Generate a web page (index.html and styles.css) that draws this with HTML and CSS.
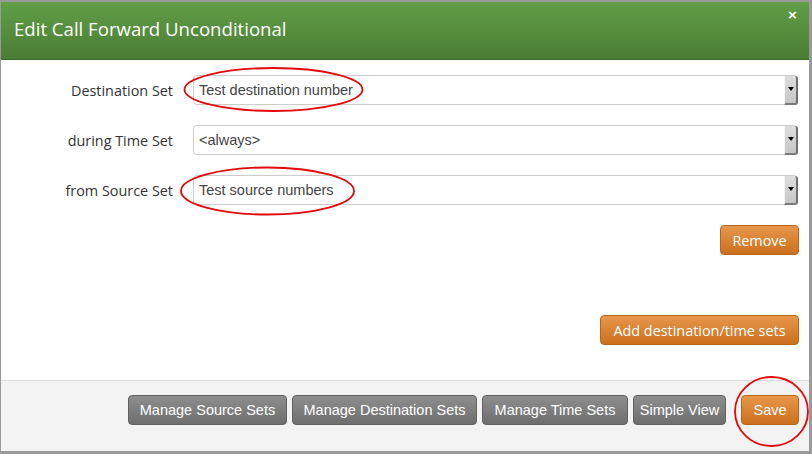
FILE: index.html
```html
<!DOCTYPE html>
<html>
<head>
<meta charset="utf-8">
<link rel="stylesheet" href="styles.css">
</head>
<body>
<div class="modal">
  <div class="modal-header">
    <h3 class="modal-title">Edit Call Forward Unconditional</h3>
    <span class="close">×</span>
  </div>
  <div class="modal-body">
    <div class="form-row">
      <label class="form-label">Destination Set</label>
      <div class="select"><span class="select-text">Test destination number</span><span class="select-arrow"></span></div>
    </div>
    <div class="form-row">
      <label class="form-label">during Time Set</label>
      <div class="select"><span class="select-text">&lt;always&gt;</span><span class="select-arrow"></span></div>
    </div>
    <div class="form-row">
      <label class="form-label">from Source Set</label>
      <div class="select"><span class="select-text">Test source numbers</span><span class="select-arrow"></span></div>
    </div>
    <div class="action-row remove-row">
      <button class="btn btn-orange btn-sans">Remove</button>
    </div>
    <div class="action-row add-row">
      <button class="btn btn-orange btn-sans">Add destination/time sets</button>
    </div>
  </div>
  <div class="modal-footer">
    <button class="btn btn-gray btn-source">Manage Source Sets</button>
    <button class="btn btn-gray btn-dest">Manage Destination Sets</button>
    <button class="btn btn-gray btn-time">Manage Time Sets</button>
    <button class="btn btn-gray btn-simple">Simple View</button>
    <button class="btn btn-orange btn-save">Save</button>
  </div>
  <svg class="annotations" width="808" height="449" viewBox="0 0 808 449">
    <ellipse cx="272.5" cy="87.5" rx="89" ry="21.5" fill="none" stroke="#e4070b" stroke-width="1.8"/>
    <ellipse cx="266.5" cy="189" rx="86.5" ry="23.5" fill="none" stroke="#e4070b" stroke-width="1.8"/>
    <ellipse cx="770.5" cy="409.5" rx="36.5" ry="34.5" fill="none" stroke="#e4070b" stroke-width="1.8"/>
  </svg>
</div>
</body>
</html>
```
FILE: styles.css
```css
* { box-sizing: border-box; }
html, body { margin: 0; padding: 0; }
body {
  width: 812px;
  height: 454px;
  background: #9a9a9a;
  padding: 2px 3px 3px 1px;
  overflow: hidden;
}
.modal {
  position: relative;
  width: 808px;
  height: 449px;
  background: #fff;
  display: flex;
  flex-direction: column;
}
.modal-header {
  height: 58px;
  background: linear-gradient(to bottom, #619e46, #4a7d34);
  border-bottom: 1px solid #3d6a2b;
  display: flex;
  align-items: center;
  padding: 0 0 4px 13px;
  position: relative;
}
.modal-title {
  margin: 0;
  font-family: "Open Sans", sans-serif;
  font-weight: 400;
  font-size: 18.6px;
  color: #fff;
}
.close {
  position: absolute;
  left: 786px;
  top: 5px;
  color: #fff;
  font-family: "DejaVu Sans", sans-serif;
  font-weight: bold;
  font-size: 13px;
  line-height: 16px;
}
.modal-body {
  flex: 1;
  padding: 15px 11px 0 0;
  display: flex;
  flex-direction: column;
}
.form-row {
  display: flex;
  align-items: center;
  height: 30px;
  margin-bottom: 20px;
}
.form-label {
  width: 172px;
  text-align: right;
  font-family: "Open Sans", sans-serif;
  font-size: 14.4px;
  color: #333;
  margin-right: 20px;
}
.select {
  flex: 1;
  height: 30px;
  border: 1px solid #ccc;
  border-radius: 4px;
  display: flex;
  align-items: center;
  justify-content: space-between;
  padding: 0 0 0 5px;
}
.select-text {
  font-family: "Liberation Sans", Arial, sans-serif;
  font-size: 14.5px;
  color: #444;
}
.select-arrow {
  position: relative;
  width: 14px;
  height: 29px;
  margin-right: -1px;
  background: linear-gradient(to bottom, #dedede, #c6c6c6);
  border-left: 1px solid #f4f4f4;
  border-right: 2px solid #6e6e6e;
  border-bottom: 2px solid #7a7a7a;
  border-radius: 0 3px 3px 0;
}
.select-arrow::after {
  content: "";
  position: absolute;
  left: 3px;
  top: 11px;
  border-left: 3px solid transparent;
  border-right: 3px solid transparent;
  border-top: 4px solid #000;
}
.action-row {
  display: flex;
  justify-content: flex-end;
}
.remove-row {
  margin-top: 0;
  margin-right: -1px;
}
.add-row {
  margin-top: 60px;
  margin-right: -1px;
}
.btn {
  height: 30px;
  border-radius: 4px;
  font-family: "Liberation Sans", Arial, sans-serif;
  font-size: 14.5px;
  color: #fff;
  padding: 0;
  cursor: pointer;
}
.btn-sans {
  font-family: "Open Sans", sans-serif;
  font-size: 14.4px;
}
.btn-orange {
  background: linear-gradient(to bottom, #e8974c, #cb701d);
  border: 1px solid #b8651c;
}
.btn-gray {
  background: linear-gradient(to bottom, #8e8e8e, #6e6e6e);
  border: 1px solid #616161;
}
.remove-row .btn { width: 79px; }
.add-row .btn { width: 199px; }
.modal-footer {
  height: 71px;
  background: #f3f3f3;
  border-top: 1px solid #dcdcdc;
  display: flex;
  justify-content: flex-end;
  align-items: flex-start;
  padding: 14px 10px 0 0;
  gap: 5px;
}
.btn-source { width: 159px; }
.btn-dest { width: 185px; }
.btn-time { width: 146px; }
.btn-simple { width: 93px; }
.btn-save {
  margin-left: 10px;
  width: 58px;
}
.annotations {
  position: absolute;
  left: 0;
  top: 0;
  pointer-events: none;
}
```
